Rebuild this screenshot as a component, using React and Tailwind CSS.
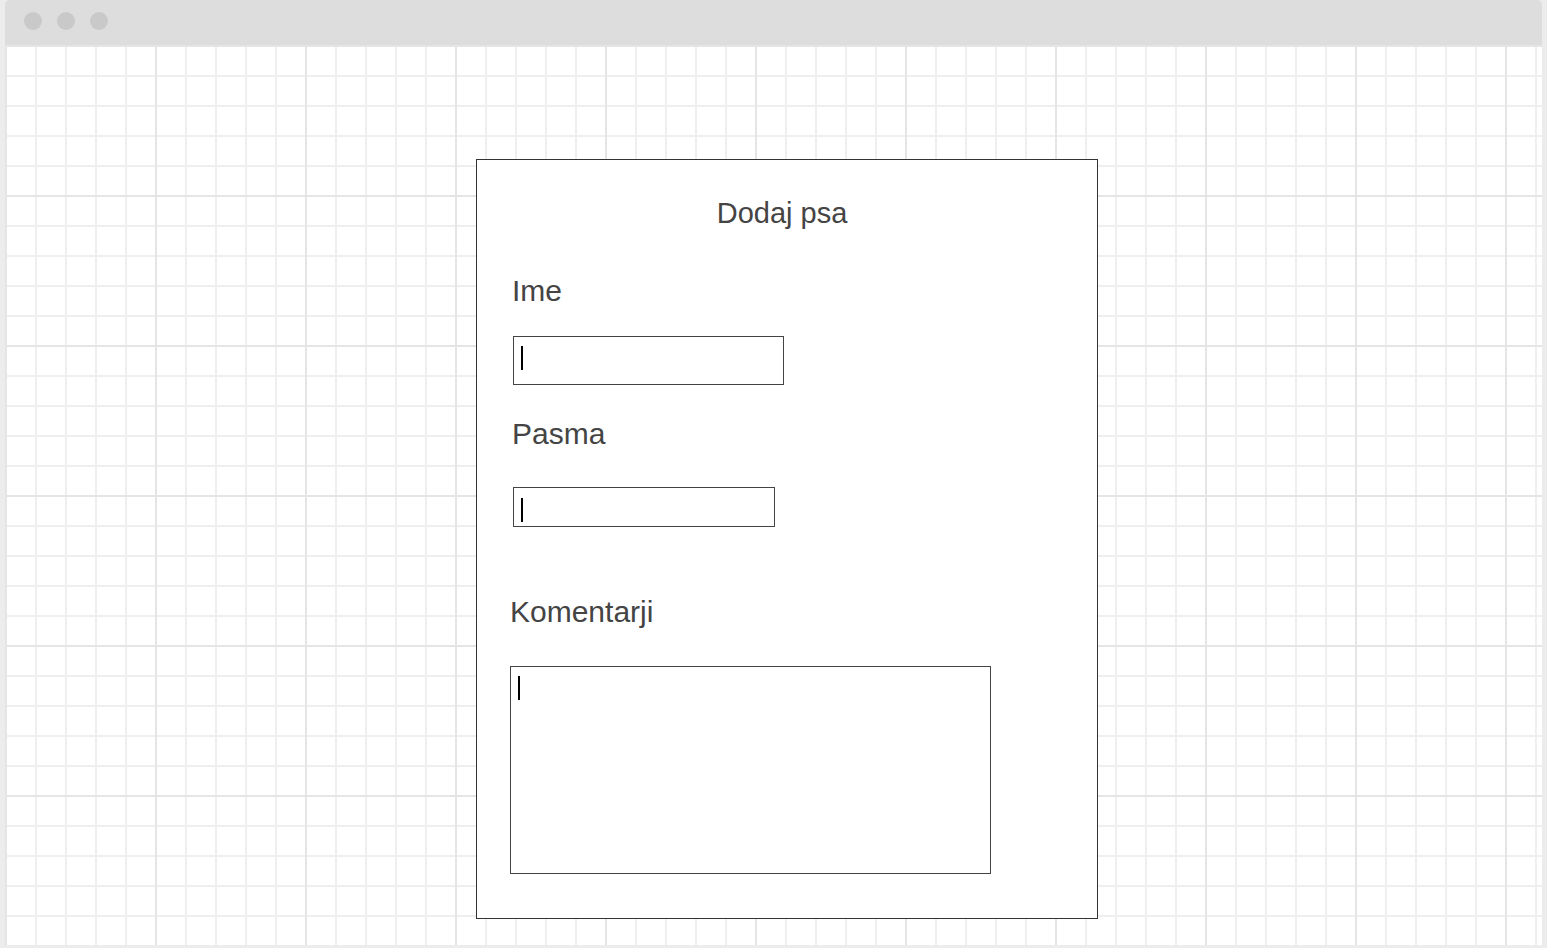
import React from 'react';

// Grid paper background: major lines every 150px, minor every 30px
const gridBg =
  '[background-image:linear-gradient(to_right,#e5e5e5_2px,transparent_2px),linear-gradient(to_bottom,#e5e5e5_2px,transparent_2px),linear-gradient(to_right,#efefef_2px,transparent_2px),linear-gradient(to_bottom,#efefef_2px,transparent_2px)] [background-size:150px_150px,150px_150px,30px_30px,30px_30px]';

const Caret = ({ top }) => (
  <span className={`block w-[2px] h-[24px] bg-black ml-[7px] ${top}`} />
);

const Label = ({ children, className }) => (
  <div className={`text-[30px] leading-[34px] text-[#444] ${className}`}>{children}</div>
);

const App = () => {
  return (
    <div
      className="w-full h-[948px] bg-[#ececec] px-[5px] pb-[3px] flex flex-col"
      style={{ fontFamily: '"Liberation Sans", Arial, sans-serif' }}
    >
      {/* Window title bar */}
      <div className="h-[45px] shrink-0 bg-[#dddddd] rounded-t-[5px] flex items-center gap-[15px] pl-[19px] pb-[3px]">
        <span className="w-[18px] h-[18px] rounded-full bg-[#c9c9c9]" />
        <span className="w-[18px] h-[18px] rounded-full bg-[#c9c9c9]" />
        <span className="w-[18px] h-[18px] rounded-full bg-[#c9c9c9]" />
      </div>

      {/* Canvas */}
      <div className={`flex-1 bg-white ${gridBg} pt-[114px] pl-[471px]`}>
        <div className="w-[622px] h-[760px] bg-white border border-[#333] flex flex-col">
          <div className="mt-[37px] text-[29px] leading-[33px] text-[#444] text-center pr-[10px]">
            Dodaj psa
          </div>

          <Label className="mt-[44px] ml-[35px]">Ime</Label>
          <div className="mt-[28px] ml-[36px] w-[271px] h-[49px] border border-[#444] bg-white">
            <Caret top="mt-[9px]" />
          </div>

          <Label className="mt-[32px] ml-[35px]">Pasma</Label>
          <div className="mt-[36px] ml-[36px] w-[262px] h-[40px] border border-[#444] bg-white">
            <Caret top="mt-[10px]" />
          </div>

          <Label className="mt-[68px] ml-[33px]">Komentarji</Label>
          <div className="mt-[37px] ml-[33px] w-[481px] h-[208px] border border-[#444] bg-white">
            <Caret top="mt-[9px]" />
          </div>
        </div>
      </div>
    </div>
  );
};

export default App;
